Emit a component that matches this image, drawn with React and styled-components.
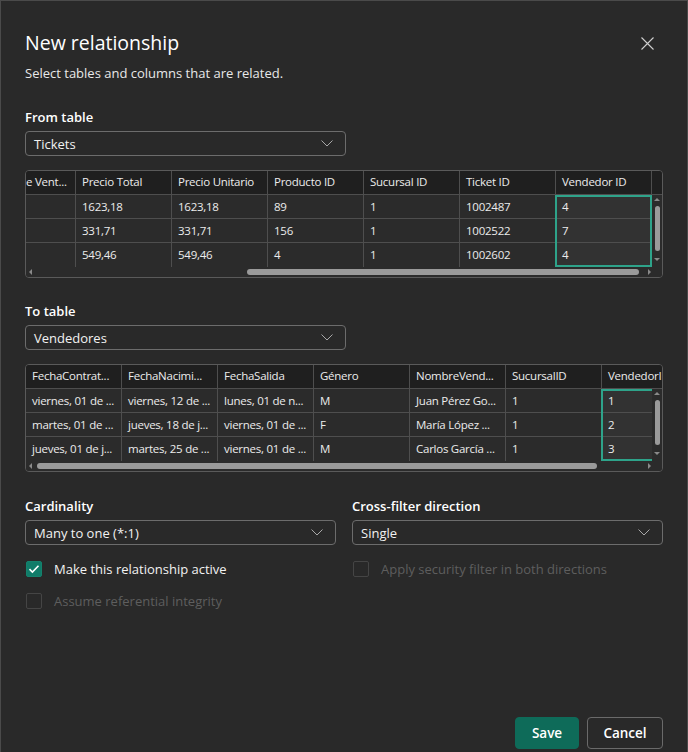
import React from 'react';
import styled, { createGlobalStyle, css } from 'styled-components';

const FONT = `"Open Sans", "Noto Sans", sans-serif`;

const GlobalStyle = createGlobalStyle`
    html, body {
        margin: 0;
        padding: 0;
        background: #292929;
    }
    * {
        box-sizing: border-box;
    }
`;

// Table data
const fromTable = {
    thumbLeft: 221,
    thumbWidth: 392,
    selected: 6,
    columns: [
        { title: 'e Vent...', width: 50, flush: true, values: ['', '', ''] },
        { title: 'Precio Total', values: ['1623,18', '331,71', '549,46'] },
        { title: 'Precio Unitario', values: ['1623,18', '331,71', '549,46'] },
        { title: 'Producto ID', values: ['89', '156', '4'] },
        { title: 'Sucursal ID', values: ['1', '1', '1'] },
        { title: 'Ticket ID', values: ['1002487', '1002522', '1002602'] },
        { title: 'Vendedor ID', values: ['4', '7', '4'] },
    ],
};

const toTable = {
    thumbLeft: 11,
    thumbWidth: 560,
    selected: 6,
    columns: [
        { title: 'FechaContrat...', values: ['viernes, 01 de ...', 'martes, 01 de ...', 'jueves, 01 de j...'] },
        { title: 'FechaNacimi...', values: ['viernes, 12 de ...', 'jueves, 18 de j...', 'martes, 25 de ...'] },
        { title: 'FechaSalida', values: ['lunes, 01 de n...', 'viernes, 01 de ...', 'viernes, 01 de ...'] },
        { title: 'Género', values: ['M', 'F', 'M'] },
        { title: 'NombreVend...', values: ['Juan Pérez Go...', 'María López ...', 'Carlos García ...'] },
        { title: 'SucursalID', values: ['1', '1', '1'] },
        { title: 'VendedorID', values: ['1', '2', '3'] },
    ],
};

function Chevron() {
    return (
        <svg width="12" height="7" viewBox="0 0 12 7" fill="none">
            <path d="M0.5 0.5 L6 6 L11.5 0.5" stroke="#a8a8a8" strokeWidth="1" />
        </svg>
    );
}

function Dropdown({ value, width }) {
    return (
        <Select $width={width}>
            <span>{value}</span>
            <Chevron />
        </Select>
    );
}

function DataGrid({ table }) {
    return (
        <GridFrame>
            <HeaderRow>
                {table.columns.map((c, i) => (
                    <HeaderCell key={i} $w={c.width || 96} $flush={c.flush}>{c.title}</HeaderCell>
                ))}
            </HeaderRow>
            <Body>
                <Columns>
                    {table.columns.map((c, i) => (
                        <Column key={i} $w={c.width || 96} $selected={i === table.selected}>
                            {c.values.map((v, j) => (
                                <Cell key={j} $selected={i === table.selected}>{v}</Cell>
                            ))}
                        </Column>
                    ))}
                </Columns>
                <VScroll>
                    <ArrowUp />
                    <VThumb />
                    <ArrowDown />
                </VScroll>
            </Body>
            <HScroll>
                <ArrowLeft />
                <HThumb $left={table.thumbLeft} $width={table.thumbWidth} />
                <ArrowRight />
            </HScroll>
        </GridFrame>
    );
}

function Check({ checked, disabled, children }) {
    return (
        <CheckRow $disabled={disabled}>
            <Box $checked={checked} $disabled={disabled}>
                {checked && (
                    <svg width="12" height="10" viewBox="0 0 12 10" fill="none">
                        <path d="M1.5 5.2 L4.4 8 L10.5 1.8" stroke="#fff" strokeWidth="1.6" />
                    </svg>
                )}
            </Box>
            {children}
        </CheckRow>
    );
}

function App() {
    return (
        <>
            <GlobalStyle />
            <Dialog>
                <Header>
                    <Title>New relationship</Title>
                    <CloseButton>
                        <svg width="13" height="13" viewBox="0 0 13 13" fill="none">
                            <path d="M0.5 0.5 L12.5 12.5 M12.5 0.5 L0.5 12.5" stroke="#cfcfcf" strokeWidth="1.1" />
                        </svg>
                    </CloseButton>
                </Header>
                <Subtitle>Select tables and columns that are related.</Subtitle>

                <FieldLabel $mt={26}>From table</FieldLabel>
                <Dropdown value="Tickets" width={321} />
                <DataGrid table={fromTable} />

                <FieldLabel $mt={24}>To table</FieldLabel>
                <Dropdown value="Vendedores" width={321} />
                <DataGrid table={toTable} />

                <Options>
                    <OptionColumn>
                        <FieldLabel $mt={0}>Cardinality</FieldLabel>
                        <Dropdown value="Many to one (*:1)" />
                        <Check checked>Make this relationship active</Check>
                        <Check disabled>Assume referential integrity</Check>
                    </OptionColumn>
                    <OptionColumn>
                        <FieldLabel $mt={0}>Cross-filter direction</FieldLabel>
                        <Dropdown value="Single" />
                        <Check disabled>Apply security filter in both directions</Check>
                    </OptionColumn>
                </Options>

                <Footer>
                    <Button $primary>Save</Button>
                    <Button>Cancel</Button>
                </Footer>
            </Dialog>
        </>
    );
}

export default App;

const Dialog = styled.div`
    width: 688px;
    height: 752px;
    display: flex;
    flex-direction: column;
    padding: 28px 24px 0 24px;
    background: #292929;
    border: 1px solid #4a4a4a;
    border-bottom: none;
    font-family: ${FONT};
    color: #ffffff;
`

const Header = styled.div`
    display: flex;
    justify-content: space-between;
    align-items: center;
    height: 28px;
`

const Title = styled.h1`
    margin: 0;
    font-size: 19.5px;
    font-weight: 400;
    line-height: 28px;
`

const CloseButton = styled.div`
    display: flex;
    align-items: center;
    justify-content: center;
    width: 20px;
    height: 20px;
    margin-right: 6px;
`

const Subtitle = styled.p`
    margin: 7px 0 0 0;
    font-size: 13px;
    line-height: 18px;
    color: #e8e8e8;
`

const FieldLabel = styled.div`
    margin-top: ${p => p.$mt}px;
    font-size: 13px;
    font-weight: 600;
    line-height: 18px;
`

const Select = styled.div`
    display: flex;
    align-items: center;
    justify-content: space-between;
    width: ${p => (p.$width ? `${p.$width}px` : '100%')};
    height: 25px;
    margin-top: 5px;
    padding: 0 12px 0 8px;
    border: 1px solid #6c6c6c;
    border-radius: 4px;
    font-size: 13px;
    color: #f2f2f2;
`

const GridFrame = styled.div`
    margin-top: 14px;
    width: 638px;
    height: 108px;
    display: flex;
    flex-direction: column;
    border: 1px solid #5a5a5a;
    border-radius: 4px;
    overflow: hidden;
    background: #2b2b2b;
    font-size: 11.5px;
    letter-spacing: -0.25px;
    color: #ececec;
`

const HeaderRow = styled.div`
    display: flex;
    height: 24px;
    flex: none;
    background: #1f1f1f;
    border-bottom: 1px solid #4e4e4e;
    overflow: hidden;
`

const HeaderCell = styled.div`
    flex: none;
    width: ${p => p.$w}px;
    padding: 0 ${p => (p.$flush ? '0' : '6px')};
    line-height: 21px;
    border-right: 1px solid #4e4e4e;
    white-space: nowrap;
    overflow: hidden;
`

const Body = styled.div`
    display: flex;
    height: 72px;
    flex: none;
`

const Columns = styled.div`
    flex: 1;
    display: flex;
    overflow: hidden;
`

const Column = styled.div`
    position: relative;
    flex: none;
    width: ${p => p.$w}px;
    ${p => p.$selected && css`
        &::after {
            content: '';
            position: absolute;
            top: -1px;
            left: -1px;
            right: 0;
            bottom: 0;
            border: 2px solid #2ea38a;
            border-top-width: 3px;
            pointer-events: none;
        }
    `}
`

const Cell = styled.div`
    height: 24px;
    padding: 0 6px;
    line-height: 23px;
    border-right: 1px solid #4e4e4e;
    border-bottom: 1px solid #4e4e4e;
    background: ${p => (p.$selected ? '#323232' : '#2b2b2b')};
    white-space: nowrap;
    overflow: hidden;

    &:last-child {
        border-bottom: none;
    }
`

const VScroll = styled.div`
    position: relative;
    flex: none;
    width: 10px;
    display: flex;
    flex-direction: column;
    align-items: center;
    padding-top: 3px;
    background: #2b2b2b;
`

const VThumb = styled.div`
    width: 5px;
    height: 45px;
    margin-top: 5px;
    border-radius: 3px;
    background: #9a9a9a;
`

const arrow = css`
    width: 0;
    height: 0;
    flex: none;
`

const ArrowUp = styled.div`
    ${arrow}
    border-left: 3.5px solid transparent;
    border-right: 3.5px solid transparent;
    border-bottom: 3px solid #8a8a8a;
`

const ArrowDown = styled.div`
    ${arrow}
    margin-top: 7px;
    border-left: 3.5px solid transparent;
    border-right: 3.5px solid transparent;
    border-top: 3px solid #8a8a8a;
`

const HScroll = styled.div`
    position: relative;
    flex: none;
    height: 10px;
    display: flex;
    align-items: center;
    padding: 0 11px 0 3px;
    background: #2b2b2b;
`

const ArrowLeft = styled.div`
    ${arrow}
    border-top: 3px solid transparent;
    border-bottom: 3px solid transparent;
    border-right: 3px solid #8a8a8a;
`

const ArrowRight = styled.div`
    ${arrow}
    margin-left: auto;
    border-top: 3.5px solid transparent;
    border-bottom: 3.5px solid transparent;
    border-left: 3px solid #8a8a8a;
`

const HThumb = styled.div`
    position: absolute;
    left: ${p => p.$left}px;
    width: ${p => p.$width}px;
    top: 2px;
    height: 6px;
    border-radius: 3px;
    background: #9a9a9a;
`

const Options = styled.div`
    display: grid;
    grid-template-columns: 1fr 1fr;
    column-gap: 16px;
    margin-top: 25px;
`

const OptionColumn = styled.div`
    display: flex;
    flex-direction: column;
`

const CheckRow = styled.div`
    display: flex;
    align-items: center;
    gap: 12px;
    height: 20px;
    margin-top: 14px;
    padding-left: 1px;
    font-size: 13px;
    color: ${p => (p.$disabled ? '#5e5e5e' : '#f2f2f2')};

    & + & {
        margin-top: 12px;
    }
`

const Box = styled.div`
    display: flex;
    align-items: center;
    justify-content: center;
    width: 16px;
    height: 16px;
    border-radius: 2px;
    border: 1px solid ${p => (p.$checked ? '#14826d' : p.$disabled ? '#454545' : '#8a8a8a')};
    background: ${p => (p.$checked ? '#107c69' : 'transparent')};
`

const Footer = styled.div`
    display: flex;
    justify-content: flex-end;
    gap: 8px;
    margin-top: auto;
    margin-bottom: 3px;
`

const Button = styled.button`
    height: 32px;
    padding: 0;
    width: ${p => (p.$primary ? '64px' : '76px')};
    border-radius: 4px;
    font-family: ${FONT};
    font-size: 13.5px;
    font-weight: 600;
    color: #ffffff;
    background: ${p => (p.$primary ? '#0e6b59' : 'transparent')};
    border: 1px solid ${p => (p.$primary ? '#0e6b59' : '#6a6a6a')};
`
